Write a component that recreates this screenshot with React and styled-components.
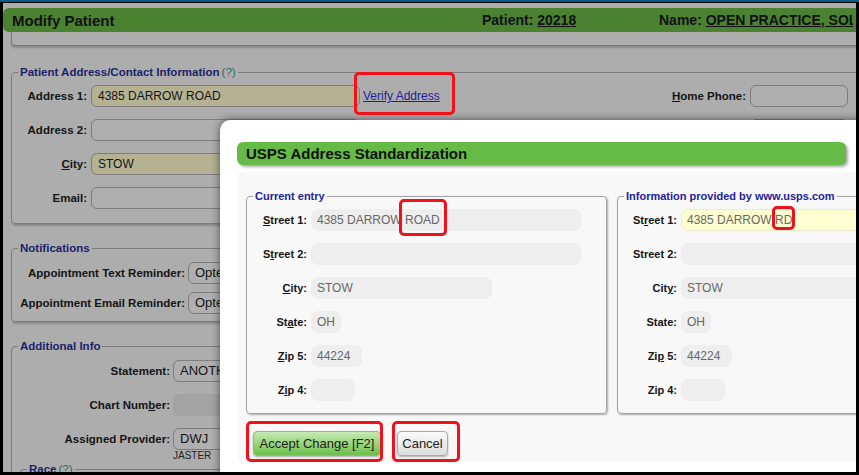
import styled, { createGlobalStyle } from "styled-components";

const GlobalStyle = createGlobalStyle`
  html, body {
    margin: 0;
    padding: 0;
    background: #000;
  }
  body {
    font-family: "Liberation Sans", Arial, sans-serif;
  }
`;

const Frame = styled.div`
  width: 859px;
  height: 475px;
  box-sizing: border-box;
  background: #000;
  border-top: 2px solid #0b5a8a;
  padding: 1px 3px 3px 3px;
`;

const Page = styled.div`
  position: relative;
  height: 100%;
  background: #adadad;
  overflow: hidden;
`;

const Sheet = styled.div`
  width: 880px;
  padding-top: 5px;
`;

const PageHeader = styled.div`
  display: flex;
  align-items: center;
  height: 24px;
  background: #4b8232;
  border-radius: 6px 0 0 6px;
  color: #111;
  font-weight: bold;
  font-size: 14px;
  white-space: nowrap;
`;

const PageTitle = styled.div`
  flex: none;
  width: 479px;
  padding-left: 9px;
  box-sizing: border-box;
  font-size: 15px;
`;

const HeaderItem = styled.div`
  flex: none;
  width: ${(p) => p.$w}px;
  overflow: hidden;
`;

const TopBox = styled.div`
  margin-left: 8px;
  height: 13px;
  border: 1px solid #7a7a7a;
  border-top: none;
  border-radius: 0 0 0 4px;
  box-shadow: 0 2px 2px rgba(0, 0, 0, 0.2);
`;

const Group = styled.fieldset`
  margin: ${(p) => p.$top}px 0 0 8px;
  padding: ${(p) => p.$pt}px 0 ${(p) => p.$pb}px 0;
  border: 1px solid #7c7c7c;
  border-radius: 4px;
  box-shadow: 1px 2px 2px rgba(0, 0, 0, 0.2);
  min-width: 0;
`;

const Legend = styled.legend`
  margin-left: 6px;
  padding: 0 2px;
  font-size: 11.5px;
  font-weight: bold;
  line-height: 14px;
  color: #1b1f6b;
`;

const Help = styled.span`
  color: #27696a;
  font-weight: normal;
  margin-left: 2px;
`;

const Rows = styled.div`
  display: flex;
  flex-direction: column;
  gap: ${(p) => p.$gap}px;
`;

const Row = styled.div`
  display: flex;
  align-items: center;
  height: 22px;
`;

const Side = styled.div`
  display: flex;
  align-items: center;
  width: ${(p) => p.$w}px;
  flex: none;
`;

const Label = styled.label`
  flex: none;
  width: ${(p) => p.$w}px;
  margin-right: ${(p) => p.$gap ?? 4}px;
  text-align: right;
  font-size: ${(p) => p.$size ?? 11.5}px;
  font-weight: bold;
  color: #141414;
  white-space: nowrap;
`;

const tones = {
  plain: "#afafaf",
  yellow: "#b4b292",
  disabled: "#a3a3a3",
};

const Field = styled.div`
  flex: none;
  width: ${(p) => p.$w}px;
  height: 22px;
  box-sizing: border-box;
  border: 1px solid ${(p) => (p.$tone === "disabled" ? "#a3a3a3" : "#7d7d7d")};
  border-radius: 6px;
  background: ${(p) => tones[p.$tone || "plain"]};
  padding-left: 6px;
  font-size: ${(p) => p.$size ?? 12}px;
  line-height: 20px;
  color: #151515;
  white-space: nowrap;
  overflow: hidden;
`;

const VerifyLink = styled.a`
  margin-left: 3px;
  font-size: 12px;
  color: #1e1e9c;
  text-decoration: underline;
`;

const SubNote = styled.div`
  margin-left: 161px;
  font-size: 10px;
  line-height: 11px;
  color: #222;
`;

const InnerGroup = styled.fieldset`
  margin: 1px 0 0 8px;
  padding: 0 0 20px;
  border: 1px solid #7c7c7c;
  border-bottom: none;
  border-radius: 4px 0 0 0;
`;

/* modal */

const Modal = styled.div`
  position: absolute;
  left: 217px;
  top: 117px;
  width: 760px;
  height: 400px;
  box-sizing: border-box;
  padding: 22px 0 0 17px;
  background: #fff;
  border-radius: 10px 0 0 0;
  box-shadow: 0 0 9px rgba(0, 0, 0, 0.55);
`;

const ModalTitle = styled.div`
  width: 609px;
  height: 23px;
  box-sizing: border-box;
  padding-left: 9px;
  background: #66ba46;
  border-radius: 6px;
  box-shadow: 2px 2px 3px rgba(0, 0, 0, 0.35);
  font-size: 15px;
  font-weight: bold;
  line-height: 23px;
  color: #111;
`;

const ModalBody = styled.div`
  margin: 7px 0 0 1px;
  padding: 18px 0 5px 8px;
  background: #f8f8f8;
`;

const Panels = styled.div`
  display: flex;
  gap: 10px;
`;

const Panel = styled.fieldset`
  flex: none;
  width: 361px;
  box-sizing: border-box;
  margin: 0;
  padding: 6px 0 12px 0;
  border: 1px solid #a2a2a2;
  border-radius: 4px;
  box-shadow: 1px 1px 2px rgba(0, 0, 0, 0.3);
  min-width: 0;
`;

const PanelLegend = styled.legend`
  margin-left: 6px;
  padding: 0 2px;
  font-size: 11px;
  font-weight: bold;
  line-height: 13px;
  color: #23239a;
`;

const Box = styled.div`
  flex: none;
  width: ${(p) => p.$w}px;
  height: 22px;
  box-sizing: border-box;
  padding-left: 5px;
  border: 1px solid ${(p) => (p.$hl ? "#ececcc" : "#eeeeee")};
  border-radius: 7px;
  background: ${(p) => (p.$hl ? "#ffffd2" : "#eeeeee")};
  font-size: 12px;
  line-height: 20px;
  color: #676767;
  white-space: nowrap;
  overflow: hidden;
`;

const Actions = styled.div`
  display: flex;
  gap: 16px;
  margin: 17px 0 0 7px;
`;

const Button = styled.button`
  flex: none;
  height: 25px;
  width: ${(p) => p.$w}px;
  padding: 0;
  border: 1px solid ${(p) => (p.$primary ? "#93b886" : "#ababab")};
  border-radius: 4px;
  background: ${(p) =>
    p.$primary
      ? "linear-gradient(#c6eab4, #6cbf4a)"
      : "linear-gradient(#fbfbfb, #dcdcdc)"};
  box-shadow: 0 1px 2px rgba(0, 0, 0, 0.3);
  font-family: "Liberation Sans", Arial, sans-serif;
  font-size: 13px;
  color: #222;
  white-space: nowrap;
`;

const Mark = styled.div`
  position: absolute;
  left: ${(p) => p.$x}px;
  top: ${(p) => p.$y}px;
  width: ${(p) => p.$w}px;
  height: ${(p) => p.$h}px;
  box-sizing: border-box;
  border: 3px solid #f2101a;
  border-radius: 5px;
`;

const current = [
  { label: <><u>S</u>treet 1:</>, value: "4385 DARROW ROAD", w: 270 },
  { label: <>S<u>t</u>reet 2:</>, value: "", w: 270 },
  { label: <><u>C</u>ity:</>, value: "STOW", w: 181 },
  { label: <>St<u>a</u>te:</>, value: "OH", w: 30 },
  { label: <><u>Z</u>ip 5:</>, value: "44224", w: 51 },
  { label: <>Z<u>i</u>p 4:</>, value: "", w: 44 },
];

const usps = [
  { label: <>St<u>r</u>eet 1:</>, value: "4385 DARROW RD", w: 270, hl: true },
  { label: <>Street 2:</>, value: "", w: 270 },
  { label: <>Cit<u>y</u>:</>, value: "STOW", w: 181 },
  { label: <>State:</>, value: "OH", w: 30 },
  { label: <>Zi<u>p</u> 5:</>, value: "44224", w: 51 },
  { label: <>Zip 4:</>, value: "", w: 44 },
];

function AddressPanel({ title, rows, labelWidth }) {
  return (
    <Panel>
      <PanelLegend>{title}</PanelLegend>
      <Rows $gap={12}>
        {rows.map((r, i) => (
          <Row key={i}>
            <Label $w={labelWidth} $size={11}>
              {r.label}
            </Label>
            <Box $w={r.w} $hl={r.hl}>
              {r.value}
            </Box>
          </Row>
        ))}
      </Rows>
    </Panel>
  );
}

export default function App() {
  return (
    <>
      <GlobalStyle />
      <Frame>
        <Page>
          <Sheet>
            <PageHeader>
              <PageTitle>Modify Patient</PageTitle>
              <HeaderItem $w={177}>
                Patient: <u>20218</u>
              </HeaderItem>
              <HeaderItem $w={194}>
                Name: <u>OPEN PRACTICE, SOL</u>
              </HeaderItem>
            </PageHeader>
            <TopBox />

            <Group $top={19} $pt={6} $pb={14}>
              <Legend>
                Patient Address/Contact Information<Help>(?)</Help>
              </Legend>
              <Rows $gap={12}>
                <Row>
                  <Side $w={640}>
                    <Label $w={75}>Address 1:</Label>
                    <Field $w={269} $tone="yellow">4385 DARROW ROAD</Field>
                    <VerifyLink href="#verify">Verify Address</VerifyLink>
                  </Side>
                  <Label $w={94}>
                    <u>H</u>ome Phone:
                  </Label>
                  <Field $w={98} />
                </Row>
                <Row>
                  <Side $w={640}>
                    <Label $w={75}>Address 2:</Label>
                    <Field $w={269} />
                  </Side>
                  <Label $w={94}>Cell Phone:</Label>
                  <Field $w={98} />
                </Row>
                <Row>
                  <Label $w={75}>
                    <u>C</u>ity:
                  </Label>
                  <Field $w={180} $tone="yellow">STOW</Field>
                </Row>
                <Row>
                  <Label $w={75}>Email:</Label>
                  <Field $w={269} />
                </Row>
              </Rows>
            </Group>

            <Group $top={17} $pt={7} $pb={7}>
              <Legend>Notifications</Legend>
              <Rows $gap={8}>
                <Row>
                  <Label $w={173} $gap={3}>
                    Appointment Text Reminder:
                  </Label>
                  <Field $w={140} $size={13}>Opted In</Field>
                </Row>
                <Row>
                  <Label $w={173} $gap={3}>
                    Appointment Email Reminder:
                  </Label>
                  <Field $w={140} $size={13}>Opted In</Field>
                </Row>
              </Rows>
            </Group>

            <Group $top={17} $pt={7} $pb={0}>
              <Legend>Additional Info</Legend>
              <Rows $gap={12}>
                <Row>
                  <Label $w={158} $gap={3}>
                    Statement:
                  </Label>
                  <Field $w={160} $size={13}>ANOTHER</Field>
                </Row>
                <Row>
                  <Label $w={158} $gap={3}>
                    Chart Num<u>b</u>er:
                  </Label>
                  <Field $w={160} $tone="disabled" />
                </Row>
                <Row>
                  <Label $w={158} $gap={3}>
                    Assigned Provider:
                  </Label>
                  <Field $w={160} $size={13}>DWJ</Field>
                </Row>
              </Rows>
              <SubNote>JASTER</SubNote>
              <InnerGroup>
                <Legend>
                  Race<Help>(?)</Help>
                </Legend>
              </InnerGroup>
            </Group>
          </Sheet>

          <Modal>
            <ModalTitle>USPS Address Standardization</ModalTitle>
            <ModalBody>
              <Panels>
                <AddressPanel title="Current entry" rows={current} labelWidth={60} />
                <AddressPanel
                  title="Information provided by www.usps.com"
                  rows={usps}
                  labelWidth={59}
                />
              </Panels>
              <Actions>
                <Button $primary $w={128}>
                  Accept Change [F2]
                </Button>
                <Button $w={51}>Cancel</Button>
              </Actions>
            </ModalBody>
          </Modal>

          <Mark $x={351} $y={69} $w={101} $h={43} />
          <Mark $x={396} $y={196} $w={48} $h={37} />
          <Mark $x={769} $y={203} $w={23} $h={24} />
          <Mark $x={243} $y={418} $w={137} $h={41} />
          <Mark $x={389} $y={418} $w={68} $h={41} />
        </Page>
      </Frame>
    </>
  );
}
